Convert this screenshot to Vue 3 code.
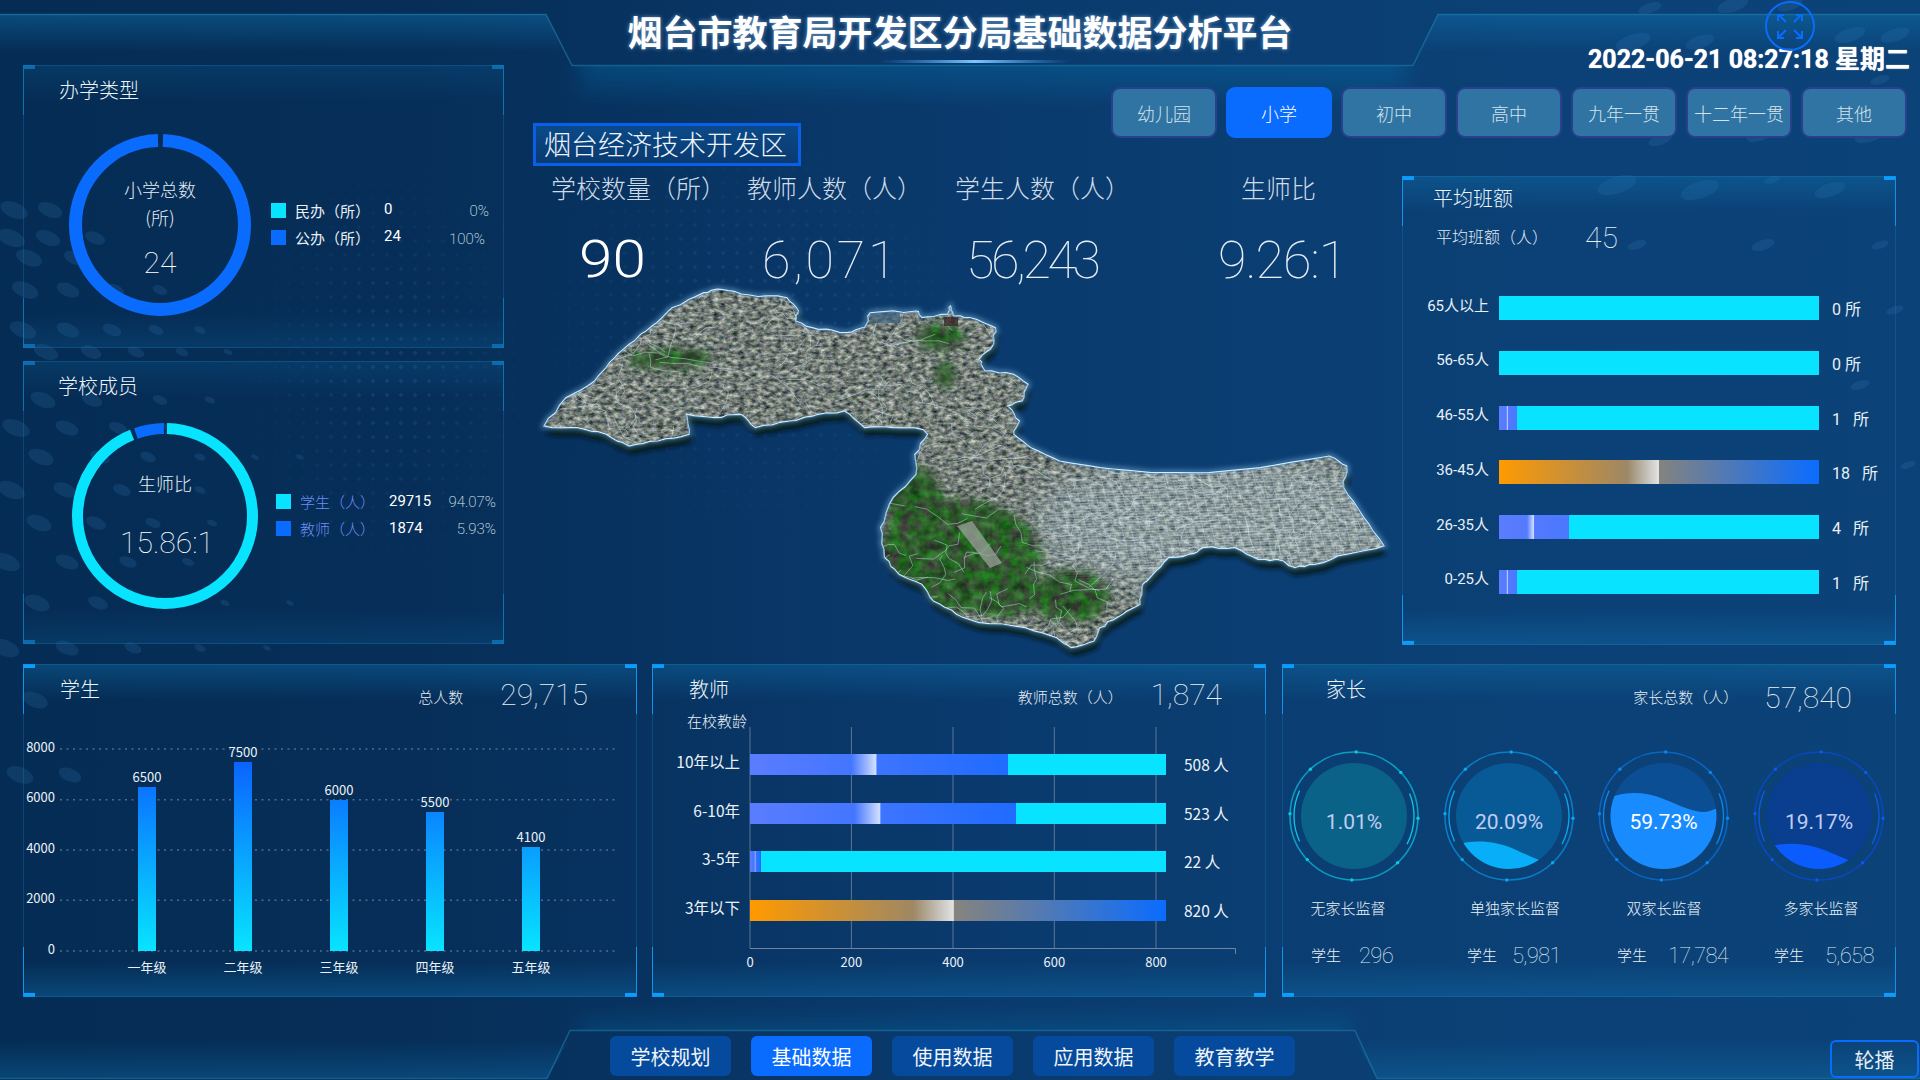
<script setup>
const tabs = ['幼儿园', '小学', '初中', '高中', '九年一贯', '十二年一贯', '其他']
const navs = ['学校规划', '基础数据', '使用数据', '应用数据', '教育教学']

// seeded random for decorative texture
let seed = 17
const rnd = () => { seed = (seed * 16807) % 2147483647; return (seed - 1) / 2147483646 }

// background ovals
const leftRows = [
  [210, [14, 50]], [238, [11, 48, 95]], [258, [29, 75]], [290, [25, 68, 115, 160]],
  [330, [23, 68, 112, 156, 200]], [352, [46, 91, 136, 182, 228]], [400, [43, 92, 160, 210]],
  [428, [16, 67, 118, 170]], [457, [41, 100, 148, 200, 255, 300]], [490, [11, 65, 122, 200, 250]],
  [523, [39, 96, 153, 212]], [562, [6, 67, 128, 188]], [603, [37, 98, 225, 290]],
  [648, [5, 67, 133, 200, 267]], [700, [35]], [775, [20, 70]]
]
const ovals = []
leftRows.forEach(([y, xs]) => xs.forEach(x => {
  const rx = Math.max(4, 15 - x / 22)
  ovals.push({ x, y, rx, ry: rx * 0.55, r: 22 })
}))
;[[1633, 42, 18], [1700, 42, 15], [1733, 5, 16], [1650, 8, 12], [1790, 5, 13], [1850, 35, 16], [1895, 35, 15],
  [1815, 95, 12], [1880, 80, 10], [1617, 185, 20], [1700, 190, 20], [1772, 180, 8], [1830, 190, 16],
  [1637, 245, 10], [1763, 245, 12], [1880, 245, 9], [1895, 310, 9], [1860, 385, 10], [1908, 465, 8],
  [1660, 140, 12], [1760, 135, 14], [1870, 135, 16]
].forEach(([x, y, rx]) => ovals.push({ x, y, rx, ry: rx * 0.42, r: -18 }))

// map outline (traced from the reference, stored in a 1568x1200 space)
const raw = [[42,465],[80,380],[130,330],[165,260],[190,220],[230,165],[265,110],[320,65],[350,55],[400,72],[465,80],[485,120],[480,150],[520,175],[570,185],[600,170],[610,125],[690,120],[700,140],[745,130],[750,105],[755,135],[795,145],[828,170],[825,220],[800,265],[810,300],[860,310],[885,340],[875,390],[850,405],[870,450],[860,490],[890,530],[940,570],[1010,590],[1100,605],[1200,605],[1290,590],[1350,572],[1410,555],[1440,585],[1435,650],[1470,740],[1505,825],[1440,850],[1385,880],[1350,890],[1330,870],[1285,865],[1245,830],[1190,830],[1165,850],[1130,860],[1100,915],[1085,940],[1080,1000],[1040,1040],[1010,1070],[1000,1110],[960,1130],[935,1100],[880,1070],[800,1055],[760,1030],[720,990],[700,940],[660,910],[635,860],[628,770],[650,680],[690,610],[688,550],[710,490],[700,475],[650,470],[600,470],[565,420],[520,430],[470,450],[410,470],[385,430],[340,440],[290,430],[295,490],[240,510],[190,525],[150,490],[100,470]]
// coast: each traced segment is split into jittered pieces, except the smooth northern bay
const local = raw.map(([x, y]) => [x / 1.742, y / 3])
const coast = []
local.forEach((p, i) => {
  const q = local[(i + 1) % local.length]
  coast.push(p)
  const smooth = i >= 32 && i <= 39
  const j = smooth ? 0.3 : 2.4
  for (let k = 1; k < 4; k++) {
    const f = k / 4
    coast.push([p[0] + (q[0] - p[0]) * f + (rnd() - 0.5) * j, p[1] + (q[1] - p[1]) * f + (rnd() - 0.5) * j])
  }
})
const mapPts = coast.map(([x, y]) => `${x.toFixed(1)},${y.toFixed(1)}`).join(' ')

const roads = []
for (let i = 0; i < 330; i++) {
  let x = 20 + rnd() * 840
  let y = 20 + rnd() * 360
  let d = `M${x.toFixed(1)} ${y.toFixed(1)}`
  const a = rnd() * 6.28
  for (let k = 0; k < 5; k++) {
    const b = a + (rnd() - 0.5) * 1.8
    x += Math.cos(b) * (5 + rnd() * 13)
    y += Math.sin(b) * (4 + rnd() * 8)
    d += `L${x.toFixed(1)} ${y.toFixed(1)}`
  }
  roads.push(d)
}
const streets = []
for (let i = 0; i < 46; i++) {
  const x = 460 + i * 9
  streets.push(`M${x} 190L${x + 26} 300`)
  const y = 195 + i * 2.6
  streets.push(`M460 ${y + 14}L870 ${y - 6}`)
}

const primary = [
  { name: '民办（所）', val: '0', pct: '0%', color: '#08e4ff', cls: 'p0' },
  { name: '公办（所）', val: '24', pct: '100%', color: '#0a6cff', cls: 'p4' }
]
const members = [
  { name: '学生（人）', val: '29715', pct: '94.07%', color: '#08e4ff' },
  { name: '教师（人）', val: '1874', pct: '5.93%', color: '#0a6cff' }
]
const R2 = 87.5
const C2 = 2 * Math.PI * R2

const gap3 = '\u00a0\u00a0\u00a0'
const rows = [
  { label: '65人以上', w: 0, kind: '', val: '0 所' },
  { label: '56-65人', w: 0, kind: '', val: '0 所' },
  { label: '46-55人', w: 5.6, kind: 'blue', val: '1' + gap3 + '所' },
  { label: '36-45人', w: 100, kind: 'orange', val: '18' + gap3 + '所' },
  { label: '26-35人', w: 22, kind: 'blue', val: '4' + gap3 + '所' },
  { label: '0-25人', w: 5.6, kind: 'blue', val: '1' + gap3 + '所' }
]

const gridY = [[749, 8000], [799.7, 6000], [850, 4000], [900.3, 2000], [951, 0]]
const grades = [
  { n: '一年级', v: 6500, x: 147, top: 787 },
  { n: '二年级', v: 7500, x: 243, top: 762 },
  { n: '三年级', v: 6000, x: 339, top: 800 },
  { n: '四年级', v: 5500, x: 435, top: 812 },
  { n: '五年级', v: 4100, x: 531, top: 847 }
]

const tGrid = [[750, 0], [851.4, 200], [953, 400], [1054.3, 600], [1156, 800]]
const tRows = [
  { n: '10年以上', y: 754, w: 258, grad: 'tBlue', v: '508 人' },
  { n: '6-10年', y: 803, w: 266, grad: 'tBlue', v: '523 人' },
  { n: '3-5年', y: 851, w: 11, grad: 'tBlue', v: '22 人' },
  { n: '3年以下', y: 900, w: 416, grad: 'tOrange', v: '820 人' }
]

const sideArc = (r, a, b) => {
  const t = v => v * Math.PI / 180
  return `M${(r * Math.cos(t(a))).toFixed(1)} ${(r * Math.sin(t(a))).toFixed(1)}A${r} ${r} 0 0 1 ${(r * Math.cos(t(b))).toFixed(1)} ${(r * Math.sin(t(b))).toFixed(1)}`
}
const arcs = [sideArc(60, 155, 205), sideArc(60, -22, 28)]
const ticks = [0, 45, 90, 135, 180, 225, 270, 315].map(a => {
  const t = (a + 2) * Math.PI / 180
  return { x: (64 * Math.cos(t)).toFixed(1), y: (64 * Math.sin(t)).toFixed(1) }
})
const gauges = [
  { id: 'g1', cx: 1354, ring: '#0a9cc0', arc: '#08c8e8', fill: '#0a6288', wave: null, waveC: '#0a6288', pct: '1.01%', txt: '#c0cdf2', name: '无家长监督', nameX: 1348, sx: 1311, num: '296', nx: 1359 },
  { id: 'g2', cx: 1509, ring: '#0a7cc4', arc: '#08a8f0', fill: '#085a96', wave: 'M-60 31C-40 23-15 24 5 33S30 45 60 54L60 60L-60 60Z', waveC: '#08aef8', pct: '20.09%', txt: '#c0cdf2', name: '单独家长监督', nameX: 1515, sx: 1467, num: '5,981', nx: 1512 },
  { id: 'g3', cx: 1663.5, ring: '#0a64c0', arc: '#0a88f0', fill: '#0c4e94', wave: 'M-60 -16C-40 -25-20 -25 0 -17S30 -4 40 -4C46 -4 50 -7 60 -10L60 60L-60 60Z', waveC: '#188cff', pct: '59.73%', txt: '#ffffff', name: '双家长监督', nameX: 1664, sx: 1617, num: '17,784', nx: 1668 },
  { id: 'g4', cx: 1819, ring: '#0a48c0', arc: '#0a5ce8', fill: '#0a3f90', wave: 'M-60 33C-38 26-15 26 5 34S30 45 60 54L60 60L-60 60Z', waveC: '#0a5cff', pct: '19.17%', txt: '#c0cdf2', name: '多家长监督', nameX: 1821, sx: 1774, num: '5,658', nx: 1825 }
]
</script>

<template>
  <div class="screen">
    <div class="bg">
      <div class="dots d1"></div>
      <div class="dots d2"></div>
      <svg class="deco" width="1920" height="1080" viewBox="0 0 1920 1080">
        <ellipse v-for="(o, i) in ovals" :key="i" :cx="o.x" :cy="o.y" :rx="o.rx" :ry="o.ry" :transform="`rotate(${o.r} ${o.x} ${o.y})`" fill="#4c94d6" opacity=".15" />
      </svg>
      <svg class="deco" width="1920" height="1080" viewBox="0 0 1920 1080">
        <defs>
          <linearGradient id="hb" x1="0" y1="0" x2="0" y2="1">
            <stop offset="0" stop-color="#0f78b4" stop-opacity=".42" />
            <stop offset="1" stop-color="#0f78b4" stop-opacity="0" />
          </linearGradient>
          <linearGradient id="hc" x1="0" y1="0" x2="0" y2="1">
            <stop offset="0" stop-color="#0f78b4" stop-opacity=".32" />
            <stop offset="1" stop-color="#0f78b4" stop-opacity="0" />
          </linearGradient>
          <linearGradient id="fb" x1="0" y1="1" x2="0" y2="0">
            <stop offset="0" stop-color="#0f78b4" stop-opacity=".34" />
            <stop offset="1" stop-color="#0f78b4" stop-opacity="0" />
          </linearGradient>
          <linearGradient id="fc" x1="0" y1="1" x2="0" y2="0">
            <stop offset="0" stop-color="#0f78b4" stop-opacity=".2" />
            <stop offset="1" stop-color="#0f78b4" stop-opacity="0" />
          </linearGradient>
          <linearGradient id="glow" x1="0" y1="0" x2="1" y2="0">
            <stop offset="0" stop-color="#3fa8ff" stop-opacity="0" />
            <stop offset=".5" stop-color="#7cc8ff" />
            <stop offset="1" stop-color="#3fa8ff" stop-opacity="0" />
          </linearGradient>
          <filter id="hblur" x="-5%" y="0" width="110%" height="100%"><feGaussianBlur stdDeviation="10 0" /></filter>
        </defs>
        <polygon points="0,14 546,14 565,52 0,52" fill="url(#hb)" />
        <polygon points="1419,52 1438,14 1920,14 1920,52" fill="url(#hb)" />
        <rect x="580" y="66" width="825" height="40" fill="url(#hc)" filter="url(#hblur)" />
        <polyline points="0,14.5 546,14.5 572,65.5 1413,65.5 1438,14.5 1920,14.5" fill="none" stroke="#1f7ba8" stroke-opacity=".6" stroke-width="1.5" />
        <rect x="880" y="60" width="190" height="3" fill="url(#glow)" />
        <polygon points="0,1040 570,1040 547,1078 0,1078" fill="url(#fb)" />
        <polygon points="1355,1040 1920,1040 1920,1078 1377,1078" fill="url(#fb)" />
        <rect x="580" y="1005" width="770" height="25" fill="url(#fc)" filter="url(#hblur)" />
        <polyline points="0,1078.5 547,1078.5 570,1030.5 1355,1030.5 1377,1078.5 1920,1078.5" fill="none" stroke="#1f7ba8" stroke-opacity=".6" stroke-width="1.5" />
      </svg>
    </div>

    <header class="top">
      <div></div>
      <h1 class="title">烟台市教育局开发区分局基础数据分析平台</h1>
      <div class="clock">2022-06-21 08:27:18 星期二</div>
      <svg class="expand" width="50" height="50" viewBox="0 0 50 50">
        <circle cx="25" cy="25" r="24" fill="none" stroke="#0a6cff" stroke-width="2" />
        <g fill="none" stroke="#0a6cff" stroke-width="2">
          <path d="M13 20V14H19M14 14L21 21" />
          <path d="M31 14H37V20M36 14L29 21" />
          <path d="M13 30V37H19M14 36L21 29" />
          <path d="M31 37H37V30M36 36L29 29" />
        </g>
      </svg>
    </header>

    <main class="upper">
      <div class="left-col">
        <section class="panel dim">
          <h2 class="ptitle pt1">办学类型</h2>
          <div class="pbody b1">
            <div class="donut d-a">
              <svg width="182" height="182" viewBox="0 0 182 182">
                <circle cx="91" cy="91" r="84.5" fill="none" stroke="#0a6cff" stroke-width="13" stroke-dasharray="525 6" stroke-dashoffset="-3" transform="rotate(-90 91 91)" />
              </svg>
              <div class="donut-text ta">
                <span class="dt">小学总数</span>
                <span class="dt second">(所)</span>
                <span class="dn">24</span>
              </div>
            </div>
            <div class="legend la">
              <template v-for="p in primary" :key="p.name">
                <i class="sw" :style="{ background: p.color }"></i>
                <span class="ln">{{ p.name }}</span>
                <span class="lv">{{ p.val }}</span>
                <span class="lp" :class="p.cls">{{ p.pct }}</span>
              </template>
            </div>
          </div>
        </section>
        <section class="panel dim">
          <h2 class="ptitle pt2">学校成员</h2>
          <div class="pbody b2">
            <div class="donut d-b">
              <svg width="186" height="186" viewBox="0 0 186 186">
                <g fill="none" stroke-width="11" transform="rotate(-90 93 93)">
                  <circle cx="93" cy="93" :r="R2" stroke="#08e4ff" :stroke-dasharray="`${C2 * 0.9407 - 4} ${C2}`" stroke-dashoffset="-2" />
                  <circle cx="93" cy="93" :r="R2" stroke="#0a6cff" :stroke-dasharray="`${C2 * 0.0593 - 4} ${C2}`" :stroke-dashoffset="-(C2 * 0.9407 + 2)" />
                </g>
              </svg>
              <div class="donut-text tb">
                <span class="dt">生师比</span>
                <span class="dn dn2">15.86:1</span>
              </div>
            </div>
            <div class="legend lb">
              <template v-for="m in members" :key="m.name">
                <i class="sw" :style="{ background: m.color }"></i>
                <span class="ln bluish">{{ m.name }}</span>
                <span class="lv lvb">{{ m.val }}</span>
                <span class="lp">{{ m.pct }}</span>
              </template>
            </div>
          </div>
        </section>
      </div>

      <div class="right-area">
        <nav class="tabs">
          <button v-for="t in tabs" :key="t" class="tab" :class="{ on: t === '小学' }">{{ t }}</button>
        </nav>
        <div class="content">
          <div class="center">
            <div class="region">烟台经济技术开发区</div>
            <div class="stat-heads">
              <span>学校数量（所）</span><span>教师人数（人）</span><span>学生人数（人）</span><span>生师比</span>
            </div>
            <div class="stat-nums">
              <span class="n1">90</span><span class="n2">6,071</span><span class="n3">56,243</span><span class="n4">9.26:1</span>
            </div>
            <svg class="map" width="900" height="400" viewBox="0 0 900 400">
              <defs>
                <clipPath id="mapClip"><polygon :points="mapPts" /></clipPath>
                <filter id="sat" x="0" y="0" width="100%" height="100%" color-interpolation-filters="sRGB">
                  <feTurbulence type="fractalNoise" baseFrequency=".16 .26" numOctaves="4" seed="8" />
                  <feColorMatrix type="matrix" values=".95 0 0 0 -.02  .9 .1 0 0 -.01  .82 0 .14 0 -.01  0 0 0 0 1" />
                </filter>
                <filter id="blur3"><feGaussianBlur stdDeviation="5" /></filter>
                <filter id="blur8"><feGaussianBlur stdDeviation="2.6" /></filter>
                <filter id="blur20"><feGaussianBlur stdDeviation="18" /></filter>
                <filter id="greenTex" x="0" y="0" width="100%" height="100%" color-interpolation-filters="sRGB">
                  <feTurbulence type="fractalNoise" baseFrequency=".1" numOctaves="3" seed="3" />
                  <feColorMatrix type="matrix" values=".3 0 0 0 .03  0 .55 0 0 .08  .28 0 0 0 .03  0 0 0 0 1" />
                </filter>
                <mask id="forest">
                  <g filter="url(#blur3)" fill="#fff">
                    <ellipse cx="440" cy="285" rx="82" ry="56" />
                    <ellipse cx="395" cy="235" rx="28" ry="40" />
                    <ellipse cx="551" cy="325" rx="38" ry="26" />
                    <ellipse cx="478" cy="325" rx="50" ry="20" />
                    <ellipse cx="150" cy="88" rx="42" ry="10" />
                    <ellipse cx="420" cy="66" rx="24" ry="13" />
                    <ellipse cx="425" cy="104" rx="9" ry="13" />
                  </g>
                </mask>
                <mask id="urban">
                  <ellipse cx="700" cy="250" rx="190" ry="70" fill="#fff" filter="url(#blur20)" />
                </mask>
              </defs>
              <polygon :points="mapPts" fill="#061216" transform="translate(2 8)" filter="url(#blur8)" />
              <polygon :points="mapPts" fill="none" stroke="#8fc8e8" stroke-opacity=".5" stroke-width="5" filter="url(#blur8)" />
              <g clip-path="url(#mapClip)">
                <rect width="900" height="400" filter="url(#sat)" />
                <rect width="900" height="400" fill="#a8c4d4" opacity=".28" mask="url(#urban)" />
                <rect width="900" height="400" mask="url(#forest)" filter="url(#greenTex)" />
                <g mask="url(#urban)">
                  <path v-for="(d, i) in streets" :key="'s' + i" :d="d" fill="none" stroke="#d6e8f2" stroke-opacity=".5" stroke-width=".6" />
                </g>
                <path v-for="(d, i) in roads" :key="'r' + i" :d="d" fill="none" stroke="#d6eefa" stroke-opacity=".62" stroke-width=".7" />
                <rect x="350" y="40" width="30" height="12" fill="#3b5f7c" opacity=".7" />
                <rect x="424" y="46" width="14" height="9" fill="#3c2b2a" opacity=".8" />
                <polygon points="437,255 452,250 482,292 470,297" fill="#9aa39a" opacity=".75" />
              </g>
              <polygon :points="mapPts" fill="none" stroke="#d2eeff" stroke-width="1.2" />
              <polygon :points="mapPts" fill="none" stroke="#2f7fd8" stroke-width=".5" transform="translate(0 1)" />
            </svg>
          </div>
          <section class="panel avg">
            <h2 class="ptitle at">平均班额</h2>
            <div class="avg-sub"><span class="al">平均班额（人）</span><span class="an">45</span></div>
            <div class="bars">
              <div v-for="r in rows" :key="r.label" class="brow">
                <span class="blab">{{ r.label }}</span>
                <div class="bar">
                  <div v-if="r.kind" class="fill" :class="r.kind" :style="{ width: r.w + '%' }"></div>
                </div>
                <span class="bval">{{ r.val }}</span>
              </div>
            </div>
          </section>
        </div>
      </div>
    </main>

    <section class="lower">
      <article class="panel low">
        <div class="head">
          <h2 class="ptitle">学生</h2>
          <div class="total tot-a"><span class="tl">总人数</span><span class="tn">29,715</span></div>
        </div>
        <svg class="chart" width="614" height="283" viewBox="23 714 614 283">
          <defs>
            <linearGradient id="barG" gradientUnits="userSpaceOnUse" x1="0" y1="762" x2="0" y2="951">
              <stop offset="0" stop-color="#0a64ff" />
              <stop offset="1" stop-color="#08e4ff" />
            </linearGradient>
          </defs>
          <g v-for="g in gridY" :key="g[1]">
            <line x1="60" x2="616" :y1="g[0]" :y2="g[0]" stroke="#8aa0b4" stroke-opacity=".55" stroke-width="1.5" stroke-dasharray="2 4.5" />
            <text x="55" :y="g[0] - 1" class="sv" text-anchor="end" dominant-baseline="middle">{{ g[1] }}</text>
          </g>
          <g v-for="b in grades" :key="b.n">
            <rect :x="b.x - 9" :y="b.top" width="18" :height="951 - b.top" fill="url(#barG)" />
            <text :x="b.x" :y="b.top - 9" class="sv" text-anchor="middle" dominant-baseline="middle">{{ b.v }}</text>
            <text :x="b.x" y="968" class="sv" text-anchor="middle" dominant-baseline="middle">{{ b.n }}</text>
          </g>
        </svg>
      </article>

      <article class="panel low">
        <div class="head">
          <h2 class="ptitle">教师</h2>
          <div class="total tot-b"><span class="tl">教师总数（人）</span><span class="tn">1,874</span></div>
        </div>
        <svg class="chart" width="614" height="283" viewBox="652 714 614 283">
          <defs>
            <linearGradient id="tBlue" x1="0" y1="0" x2="1" y2="0">
              <stop offset="0" stop-color="#5b7cff" />
              <stop offset="1" stop-color="#1f6cff" />
            </linearGradient>
            <linearGradient id="tOrange" x1="0" y1="0" x2="1" y2="0">
              <stop offset="0" stop-color="#ff9a00" />
              <stop offset="1" stop-color="#0a6cff" />
            </linearGradient>
            <linearGradient id="shine" x1="0" y1="0" x2="1" y2="0">
              <stop offset=".8" stop-color="#fff" stop-opacity="0" />
              <stop offset="1" stop-color="#fff" stop-opacity=".78" />
            </linearGradient>
          </defs>
          <text x="687" y="723" class="sv t15" dominant-baseline="middle">在校教龄</text>
          <line v-for="g in tGrid" :key="g[1]" :x1="g[0]" :x2="g[0]" y1="727" y2="948" stroke="#8fa0b4" stroke-opacity=".6" />
          <path d="M750 948.5H1235.5V954" fill="none" stroke="#8fa0b4" stroke-opacity=".75" />
          <text v-for="g in tGrid" :key="'l' + g[1]" :x="g[0]" y="963" class="sv" text-anchor="middle" dominant-baseline="middle">{{ g[1] }}</text>
          <g v-for="r in tRows" :key="r.n">
            <rect x="750" :y="r.y" width="416" height="21" fill="#08e4ff" />
            <rect x="750" :y="r.y" :width="r.w" height="21" :fill="`url(#${r.grad})`" />
            <rect x="750" :y="r.y" :width="r.w * 0.49" height="21" fill="url(#shine)" />
            <text x="740" :y="r.y + 10" class="sv t16" text-anchor="end" dominant-baseline="middle">{{ r.n }}</text>
            <text x="1184" :y="r.y + 13" class="sv t16" dominant-baseline="middle">{{ r.v }}</text>
          </g>
        </svg>
      </article>

      <article class="panel low third">
        <div class="head hc">
          <h2 class="ptitle">家长</h2>
          <div class="total tot-c"><span class="tl">家长总数（人）</span><span class="tn">57,840</span></div>
        </div>
        <svg class="chart" width="614" height="283" viewBox="1282 714 614 283">
          <defs>
            <clipPath id="liquid"><circle r="53" /></clipPath>
          </defs>
          <g v-for="g in gauges" :key="g.id">
            <g :transform="`translate(${g.cx} 816)`">
              <circle r="64" fill="none" :stroke="g.ring" stroke-width="1.6" />
              <circle v-for="(t, i) in ticks" :key="i" :cx="t.x" :cy="t.y" r="1.7" :fill="g.arc" />
              <path v-for="(a, i) in arcs" :key="'a' + i" :d="a" fill="none" :stroke="g.arc" stroke-width="1.3" />
              <circle r="53" :fill="g.fill" />
              <g clip-path="url(#liquid)">
                <path v-if="g.wave" :d="g.wave" :fill="g.waveC" />
              </g>
              <text y="7" text-anchor="middle" dominant-baseline="middle" class="gp" :fill="g.txt">{{ g.pct }}</text>
            </g>
            <text :x="g.nameX" y="910" text-anchor="middle" dominant-baseline="middle" class="sv t15">{{ g.name }}</text>
            <text :x="g.sx" y="957" dominant-baseline="middle" class="sv t15">学生</text>
            <text :x="g.nx" y="957" dominant-baseline="middle" class="gn">{{ g.num }}</text>
          </g>
        </svg>
      </article>
    </section>

    <footer class="nav">
      <button v-for="n in navs" :key="n" class="nb" :class="{ on: n === '基础数据' }">{{ n }}</button>
      <button class="carousel">轮播</button>
    </footer>
  </div>
</template>

<style>
html, body { margin: 0; background: #062c54; }
</style>

<style scoped>
.screen {
  width: 1920px; height: 1080px; position: relative; overflow: hidden;
  display: flex; flex-direction: column;
  background: linear-gradient(90deg, #052c54 0%, #062e58 22%, #0a3a6d 50%, #0b4176 80%, #0b4277 100%);
  color: #fff;
  font-family: "Noto Sans CJK SC", "Roboto", sans-serif;
}
.bg, .deco { position: absolute; left: 0; top: 0; pointer-events: none; }
.bg { width: 1920px; height: 1080px; }
.dots {
  position: absolute;
  background-image: radial-gradient(circle, rgba(60,140,210,.2) 1.6px, transparent 2px);
  background-size: 14px 14px;
}
.d1 { left: 520px; top: 120px; width: 470px; height: 420px; -webkit-mask-image: radial-gradient(closest-side, #000, transparent); mask-image: radial-gradient(closest-side, #000, transparent); }
.d2 { left: 240px; top: 150px; width: 300px; height: 440px; -webkit-mask-image: radial-gradient(closest-side, #000, transparent); mask-image: radial-gradient(closest-side, #000, transparent); }

.top { position: relative; height: 65px; display: grid; grid-template-columns: 1fr auto 1fr; }
.title {
  margin: 12px 0 0; font-size: 35px; font-weight: 700; line-height: 38px; color: #fff; white-space: nowrap;
  text-shadow: 0 0 4px rgba(180,220,255,.6);
}
.clock {
  align-self: end; justify-self: end; margin: 0 10px -10px 0; line-height: 30px;
  font-family: "Roboto", "Noto Sans CJK SC", sans-serif; font-size: 25px; font-weight: 700; white-space: nowrap;
  text-shadow: 0 0 1px #fff;
}
.expand { position: absolute; left: 1765px; top: 1px; }

.upper { display: flex; height: 579px; padding-left: 23px; position: relative; }
.left-col { width: 481px; display: flex; flex-direction: column; gap: 13px; }

.panel {
  --a: #0a9cff;
  --g: .42;
  position: relative; box-sizing: border-box;
  box-shadow: inset 0 0 0 1px rgba(30,130,190,.3);
  background:
    linear-gradient(var(--a), var(--a)) 0 0 / 12px 4px no-repeat,
    linear-gradient(var(--a), var(--a)) 100% 0 / 12px 4px no-repeat,
    linear-gradient(var(--a), var(--a)) 0 100% / 12px 4px no-repeat,
    linear-gradient(var(--a), var(--a)) 100% 100% / 12px 4px no-repeat,
    linear-gradient(var(--a), var(--a)) 0 0 / 1px 50px no-repeat,
    linear-gradient(var(--a), var(--a)) 100% 0 / 1px 50px no-repeat,
    linear-gradient(var(--a), var(--a)) 0 100% / 1px 50px no-repeat,
    linear-gradient(var(--a), var(--a)) 100% 100% / 1px 50px no-repeat,
    linear-gradient(180deg, rgba(14,110,170,var(--g)), rgba(14,110,170,0) 36px),
    linear-gradient(0deg, rgba(14,110,170,var(--g)), rgba(14,110,170,0) 36px);
}
.dim { --a: #0a6cac; --g: .2; height: 283px; }
.ptitle { margin: 11px 0 0; font-size: 20px; font-weight: 300; line-height: 28px; color: #eef5fa; }
.pt1 { margin-left: 36px; }
.pt2 { margin-left: 35px; }
.pbody { display: flex; }
.b1 { margin: 30px 0 0 46px; }
.b2 { margin: 23px 0 0 49px; }
.donut { position: relative; flex: none; }
.donut svg { display: block; }
.d-a { width: 182px; height: 182px; }
.d-b { width: 186px; height: 186px; }
.donut-text { position: absolute; inset: 0; display: flex; flex-direction: column; align-items: center; }
.ta { padding-top: 42px; }
.tb { padding-top: 47px; }
.dt { font-size: 18px; line-height: 26px; font-weight: 300; color: #e4edf4; }
.second { margin-top: 2px; }
.dn { font-family: "Roboto", sans-serif; font-weight: 100; font-size: 30px; line-height: 34px; margin-top: 16px; }
.dn2 { margin-top: 30px; margin-left: 4px; }
.legend { display: grid; grid-auto-rows: 27px; align-items: center; align-self: center; }
.la { margin: -2px 0 0 20px; width: 218px; grid-template-columns: 15px 98px 32px 1fr; }
.lb { margin: -2px 0 0 18px; width: 220px; grid-template-columns: 15px 98px 42px 1fr; }
.sw { width: 15px; height: 15px; display: block; }
.ln { font-size: 15px; margin-left: 9px; white-space: nowrap; color: #e8f0f6; font-weight: 400; }
.bluish { color: #6d8df5; font-weight: 300; }
.lv { font-family: "Roboto", sans-serif; font-size: 15px; font-weight: 400; margin-bottom: 4px; }
.lvb { margin-bottom: 2px; }
.lp { font-family: "Roboto", sans-serif; font-size: 15px; font-weight: 200; text-align: right; color: #dfe8f0; }
.p4 { padding-right: 4px; margin-top: 3px; }

.right-area { margin-left: 29px; width: 1387px; }
.tabs { display: flex; justify-content: flex-end; gap: 9px; padding: 22px 13px 0 0; position: relative; z-index: 2; }
.tab {
  width: 106px; height: 51px; box-sizing: border-box; border-radius: 9px;
  border: 2px solid #2a3f8e; background: #2f74a2; color: #d3e3ec;
  font: 300 18px "Noto Sans CJK SC", sans-serif; padding: 0;
}
.tab.on { background: #0a6cff; border-color: #0a6cff; color: #fff; }
.content { display: flex; margin-top: -15px; }
.center { width: 869px; position: relative; flex: none; }
.region {
  width: 268px; height: 43px; box-sizing: border-box; border: 3px solid #0a5fe8;
  font-size: 27px; font-weight: 300; line-height: 36px; padding-left: 8px; white-space: nowrap;
  background: linear-gradient(180deg, #0a4a8a, #0a3a70); color: #eef4fa;
}
.stat-heads {
  display: grid; grid-template-columns: 196px 208px 286px 1fr; padding-left: 18px; margin-top: 5px;
  font-size: 25px; font-weight: 300; line-height: 32px; color: #cfdbe6; white-space: nowrap;
}
.stat-nums {
  display: grid; grid-template-columns: 181px 206px 252px 1fr; padding-left: 46px; margin-top: 28px;
  font-family: "Roboto", sans-serif; font-size: 52px; font-weight: 100; line-height: 60px; color: #e6eef5;
}
.n1 { font-weight: 300; color: #fff; transform: scaleX(1.16); transform-origin: left center; margin-top: -1px; }
.n2 { letter-spacing: 2.7px; margin-left: 2px; }
.n3 { letter-spacing: -3.4px; }
.n4 { letter-spacing: -1px; }
.map { position: absolute; left: -13px; top: 148px; overflow: visible; }

.avg { width: 494px; height: 469px; margin-top: 53px; flex: none; }
.at { margin: 8px 0 0 31px; }
.avg-sub { display: flex; align-items: center; margin: 7px 0 0 34px; height: 34px; }
.al { width: 149px; font-size: 16px; font-weight: 300; color: #e0eaf2; white-space: nowrap; }
.an { font-family: "Roboto", sans-serif; font-size: 30px; font-weight: 100; color: #e6eef5; margin-top: 2px; }
.bars { margin-top: 43px; display: flex; flex-direction: column; gap: 30.75px; }
.brow { display: flex; align-items: center; height: 24px; }
.blab { width: 87px; margin: 0 10px 8px 0; text-align: right; font-size: 15px; color: #e8f0f6; white-space: nowrap; font-family: "Roboto", "Noto Sans CJK SC", sans-serif; }
.bar { width: 320px; height: 24px; background: #08e4ff; display: flex; flex: none; }
.fill { position: relative; height: 100%; }
.fill::after { content: ""; position: absolute; left: 0; top: 0; height: 100%; width: 50%; background: linear-gradient(90deg, rgba(255,255,255,0) 80%, rgba(255,255,255,.78)); }
.fill.blue { background: linear-gradient(90deg, #5b7cff, #4a78ff); }
.fill.orange { background: linear-gradient(90deg, #ff9a00, #0a6cff); }
.bval { margin-left: 13px; font-size: 16px; color: #e8f0f6; white-space: nowrap; font-family: "Roboto", "Noto Sans CJK SC", sans-serif; }

.lower { display: flex; gap: 15px; margin-top: 20px; padding-left: 23px; height: 333px; position: relative; }
.low { width: 614px; height: 333px; }
.third { margin-left: 1px; }
.head { display: flex; height: 50px; padding-left: 37px; }
.hc { padding-left: 44px; }
.total { margin-left: auto; display: flex; align-items: center; height: 34px; margin-top: 13px; }
.tot-a { padding-right: 49px; gap: 37px; }
.tot-b { padding-right: 44px; gap: 28px; }
.tot-c { padding-right: 44px; gap: 26px; margin-top: 16px; }
.tl { font-size: 15px; font-weight: 300; color: #e4edf4; margin-top: 4px; white-space: nowrap; }
.tot-c .tl { margin-top: -1px; }
.tn { font-family: "Roboto", sans-serif; font-size: 30px; font-weight: 100; color: #e6eef5; }
.chart { display: block; overflow: visible; }
.sv { font: 400 13px "Noto Sans CJK SC", sans-serif; fill: #eaf2f8; }
.t15 { font-size: 15px; font-weight: 300; }
.t16 { font-size: 15.5px; font-weight: 400; }
.gp { font: 400 21px "Roboto", sans-serif; }
.gn { font: 100 22px "Roboto", sans-serif; fill: #dfe8f0; letter-spacing: -.7px; }

.nav { display: flex; gap: 20px; padding: 39px 0 0 610px; position: relative; }
.nb {
  width: 121px; height: 40px; border: 0; border-radius: 6px; background: #054a9c; color: #eef4fa; padding: 0;
  font: 400 20px "Noto Sans CJK SC", sans-serif;
}
.nb.on { background: #0a6cff; color: #fff; }
.carousel {
  margin: 4px 1px 0 auto; width: 89px; height: 38px; box-sizing: border-box; padding: 0;
  border: 2px solid #0a6cff; border-radius: 6px; background: transparent;
  color: #e6eef5; font: 400 20px "Noto Sans CJK SC", sans-serif;
}
</style>
